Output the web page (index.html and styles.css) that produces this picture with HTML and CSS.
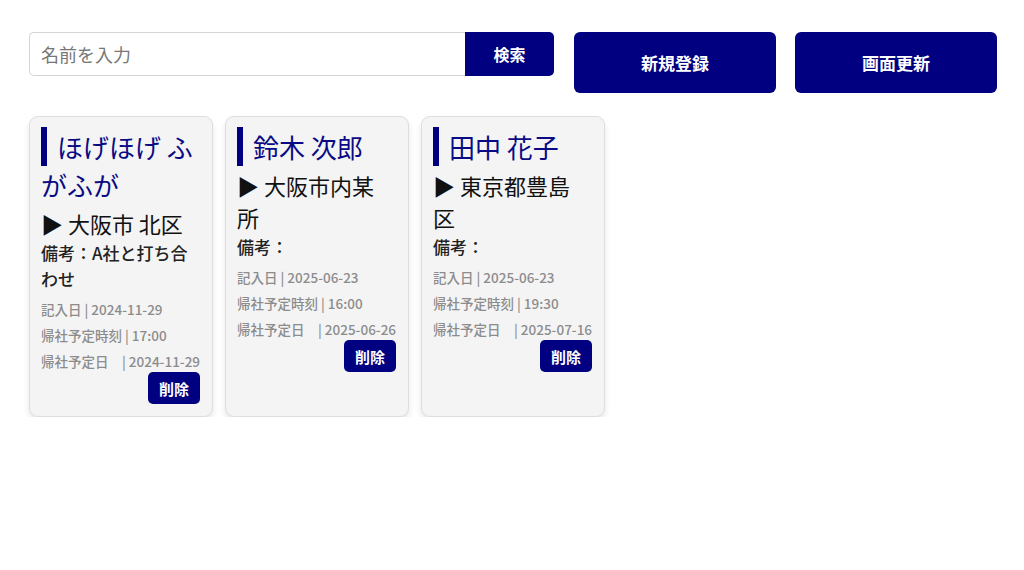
FILE: index.html
```html
<!DOCTYPE html>
<html lang="ja">
<head>
<meta charset="utf-8">
<link rel="stylesheet" href="styles.css">
</head>
<body>
<div class="page">
  <div class="toolbar">
    <div class="search">
      <input class="search-input" type="text" placeholder="名前を入力">
      <button class="search-btn">検索</button>
    </div>
    <button class="big-btn">新規登録</button>
    <button class="big-btn big-btn-last">画面更新</button>
  </div>
  <div class="cards">
    <div class="card">
      <h2 class="name"><span class="name-text">ほげほげ ふがふが</span></h2>
      <p class="addr">▶ 大阪市 北区</p>
      <p class="note">備考：A社と打ち合わせ</p>
      <p class="meta">記入日 | 2024-11-29</p>
      <p class="meta">帰社予定時刻 | 17:00</p>
      <p class="meta">帰社予定日　| 2024-11-29</p>
      <div class="actions"><button class="del-btn">削除</button></div>
    </div>
    <div class="card">
      <h2 class="name"><span class="name-text">鈴木 次郎</span></h2>
      <p class="addr">▶ 大阪市内某所</p>
      <p class="note">備考：</p>
      <p class="meta">記入日 | 2025-06-23</p>
      <p class="meta">帰社予定時刻 | 16:00</p>
      <p class="meta">帰社予定日　| 2025-06-26</p>
      <div class="actions"><button class="del-btn">削除</button></div>
    </div>
    <div class="card">
      <h2 class="name"><span class="name-text">田中 花子</span></h2>
      <p class="addr">▶ 東京都豊島区</p>
      <p class="note">備考：</p>
      <p class="meta">記入日 | 2025-06-23</p>
      <p class="meta">帰社予定時刻 | 19:30</p>
      <p class="meta">帰社予定日　| 2025-07-16</p>
      <div class="actions"><button class="del-btn">削除</button></div>
    </div>
  </div>
</div>
</body>
</html>
```
FILE: styles.css
```css
* { box-sizing: border-box; }
html, body {
  margin: 0;
  padding: 0;
  background: #fff;
  font-family: "Noto Sans CJK JP", "Noto Sans", sans-serif;
}
.page {
  padding: 32px 27px 0 29px;
}
.toolbar {
  display: flex;
  align-items: flex-start;
  gap: 20px;
}
.search {
  flex: 1;
  display: flex;
  height: 44px;
}
.search-input {
  flex: 1;
  min-width: 0;
  height: 44px;
  border: 1px solid #d4d4d4;
  border-right: none;
  border-radius: 5px 0 0 5px;
  padding: 0 11px;
  font-family: inherit;
  font-size: 18px;
  color: #333;
  outline: none;
}
.search-input::placeholder { color: #777; }
.search-btn {
  width: 89px;
  height: 44px;
  border: none;
  border-radius: 0 5px 5px 0;
  background: #000080;
  color: #fff;
  font-family: inherit;
  font-size: 16px;
  font-weight: bold;
}
.big-btn {
  width: 202px;
  height: 61px;
  border: none;
  border-radius: 6px;
  background: #000080;
  color: #fff;
  font-family: inherit;
  font-size: 17px;
  font-weight: bold;
}
.big-btn-last {
  margin-left: -1px;
}
.cards {
  display: flex;
  align-items: stretch;
  gap: 12px;
  margin-top: 23px;
}
.card {
  width: 184px;
  background: #f4f4f4;
  border: 1px solid #dedede;
  border-radius: 9px;
  padding: 11px 13px 12px 11px;
  box-shadow: 0 4px 6px rgba(0, 0, 0, 0.1);
}
.name {
  margin: 0 0 3px;
  font-size: 26px;
  font-weight: normal;
  line-height: 38px;
  color: #0a0a85;
}
.name-text {
  border-left: 6px solid #000080;
  padding: 1px 0 1px 10px;
}
.addr {
  margin: 0 0 1px;
  font-size: 22px;
  line-height: 32px;
  color: #111;
}
.note {
  margin: 0 0 7px;
  font-size: 17px;
  line-height: 26px;
  font-weight: 500;
  color: #222;
}
.meta {
  margin: 0 0 6px;
  font-size: 13.5px;
  line-height: 20px;
  font-weight: 500;
  color: #8c8c8c;
  white-space: nowrap;
}
.actions {
  display: flex;
  justify-content: flex-end;
  margin: -5px -1px 0 0;
}
.del-btn {
  width: 52px;
  height: 32px;
  border: none;
  border-radius: 5px;
  background: #000080;
  color: #fff;
  font-family: inherit;
  font-size: 15px;
  font-weight: bold;
}
```
